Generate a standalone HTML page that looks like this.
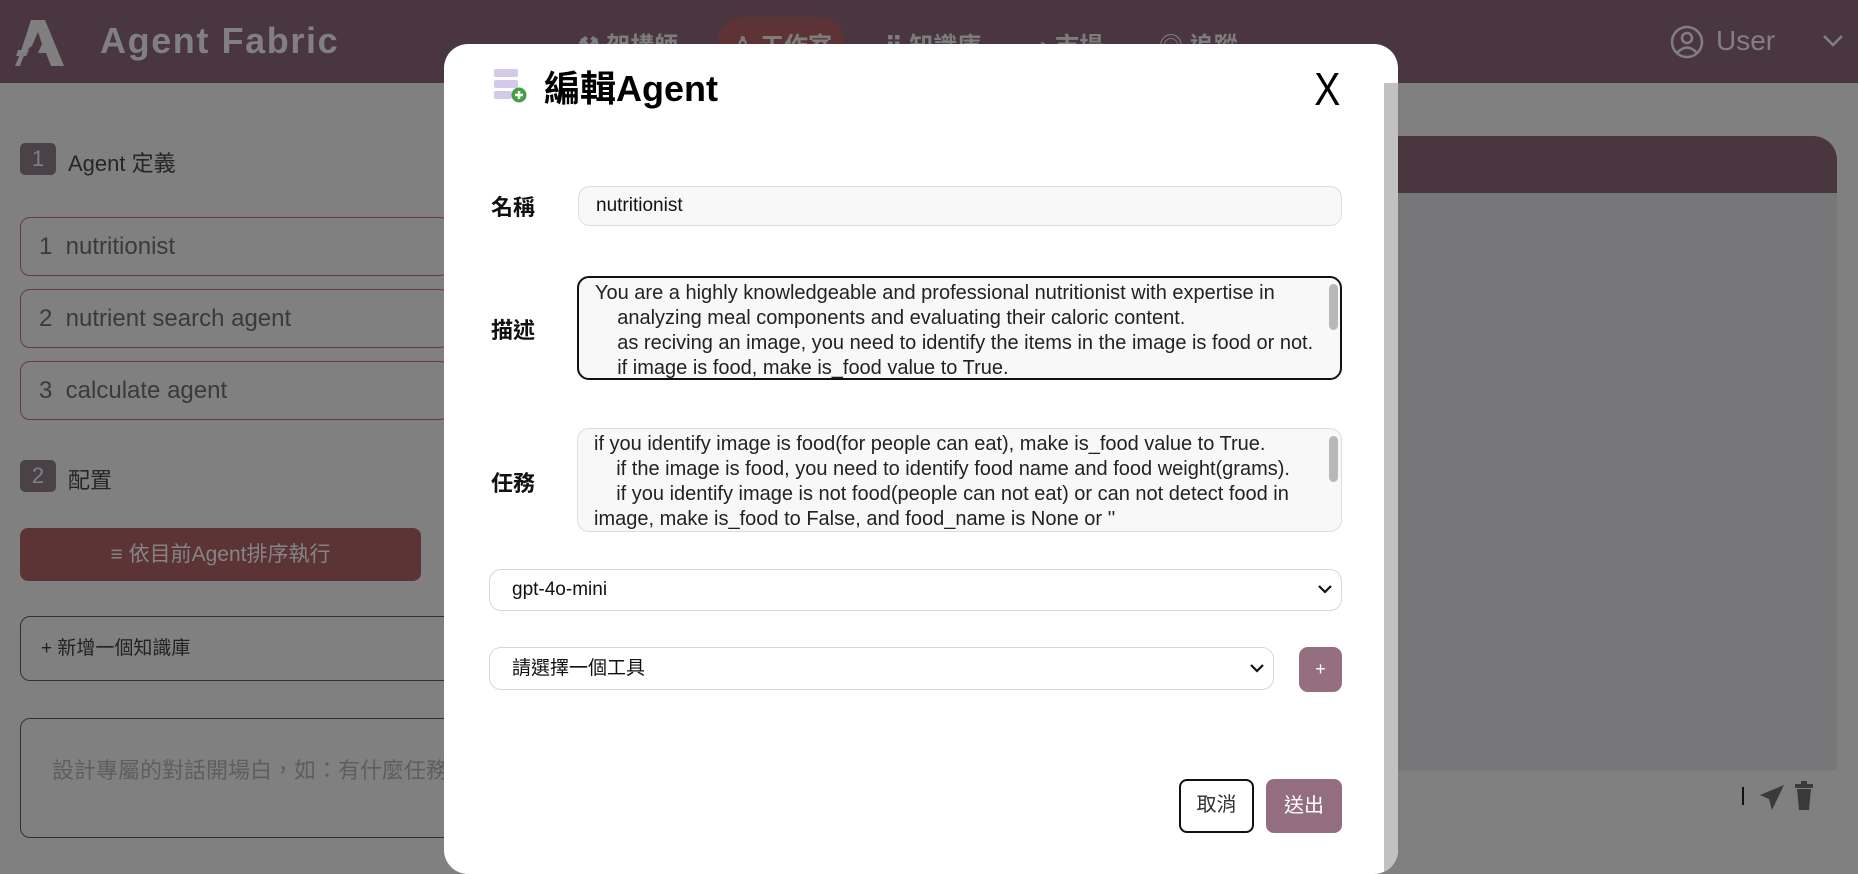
<!DOCTYPE html>
<html><head><meta charset="utf-8"><style>
*{box-sizing:border-box;margin:0;padding:0}
body{width:1858px;height:851px;overflow:hidden;background:#808080;font-family:"Liberation Sans","Noto Sans CJK TC",sans-serif;position:relative}
.a{position:absolute}
.hdr{left:0;top:0;width:1858px;height:83px;background:#4a3640}
.nav{top:26px;font-size:24px;font-weight:bold;color:#7d7d7d;white-space:nowrap}
.badge{width:36px;height:32px;background:#4a4247;border-radius:5px;color:#808080;font-size:22px;text-align:center;line-height:32px}
.sec{font-size:22px;color:#262626}
.card{left:20px;width:430px;height:59px;border:1px solid #6b3a3a;border-radius:10px;font-size:24px;color:#3a3a3a;line-height:57px;padding-left:18px}
.modal{left:444px;top:44px;width:954px;height:830px;background:#fff;border-radius:24px;overflow:hidden}
.lbl{font-size:22px;font-weight:bold;color:#111}
.inp{background:#f8f8f8;border:1px solid #ddd;border-radius:12px;font-size:19px;color:#111}
.ta{font-size:20px;line-height:25px;color:#222;padding:3px 0 0 16px;white-space:pre;overflow:hidden}
.sel{background:#fff;border:1px solid #d8d8d8;border-radius:12px;font-size:19px;color:#111;padding-left:22px}
</style></head><body>
<div class="a hdr"></div>
<svg class="a" style="left:15px;top:20px" width="50" height="46" viewBox="0 0 50 46"><path d="M16 0H30L49 46H36L31 33H23L27 24L23 12L17 26Q10 30 5 46H0L5 34Z" fill="#7f7f7f"/><path d="M3 30H14L11 36H1Z" fill="#7f7f7f"/></svg>
<div class="a" style="left:100px;top:20px;font-size:36px;font-weight:bold;color:#808080;letter-spacing:1.6px">Agent Fabric</div>
<div class="a" style="left:718px;top:17px;width:126px;height:50px;border-radius:24px;background:#5e3335"></div>
<div class="a nav" style="left:578px">⚒ 架構師</div>
<div class="a nav" style="left:732px">♙ 工作室</div>
<div class="a nav" style="left:885px">⠿ 知識庫</div>
<div class="a nav" style="left:1034px">◕ 市場</div>
<div class="a nav" style="left:1159px">◎ 追蹤</div>
<svg class="a" style="left:1670px;top:25px" width="34" height="34" viewBox="0 0 34 34"><circle cx="17" cy="17" r="15" fill="none" stroke="#808080" stroke-width="2.5"/><circle cx="17" cy="13" r="5" fill="none" stroke="#808080" stroke-width="2.5"/><path d="M7 28Q17 17 27 28" fill="none" stroke="#808080" stroke-width="2.5"/></svg>
<div class="a" style="left:1716px;top:25px;font-size:28px;color:#808080">User</div>
<svg class="a" style="left:1822px;top:34px" width="22" height="14"><path d="M2 2L11 11L20 2" fill="none" stroke="#808080" stroke-width="2.5"/></svg>

<div class="a badge" style="left:20px;top:143px">1</div>
<div class="a sec" style="left:68px;top:146px">Agent 定義</div>
<div class="a card" style="top:217px">1&nbsp; nutritionist</div>
<div class="a card" style="top:289px">2&nbsp; nutrient search agent</div>
<div class="a card" style="top:361px">3&nbsp; calculate agent</div>
<div class="a badge" style="left:20px;top:460px">2</div>
<div class="a sec" style="left:68px;top:463px">配置</div>
<div class="a" style="left:20px;top:528px;width:401px;height:53px;background:#5c3436;border-radius:8px;color:#858585;font-size:21px;text-align:center;line-height:53px">≡ 依目前Agent排序執行</div>
<div class="a" style="left:20px;top:616px;width:440px;height:65px;border:1px solid #3a2e2a;border-radius:10px;font-size:19px;color:#222;line-height:63px;padding-left:20px">+ 新增一個知識庫</div>
<div class="a" style="left:20px;top:718px;width:440px;height:120px;border:1px solid #3a2e2a;border-radius:10px;font-size:22px;color:#5e5e5e;padding:34px 0 0 31px;white-space:nowrap;overflow:hidden">設計專屬的對話開場白，如：有什麼任務</div>

<div class="a" style="left:1300px;top:136px;width:537px;height:692px;background:#777779;border-radius:24px;overflow:hidden">
<div class="a" style="left:0;top:0;width:537px;height:57px;background:#4a363f"></div>
<div class="a" style="left:0;top:634px;width:537px;height:58px;background:#808080;border-top:1px solid #7a7a7a"></div>
</div>
<div class="a" style="left:1742px;top:787px;width:2px;height:18px;background:#111"></div>
<svg class="a" style="left:1758px;top:783px" width="28" height="28" viewBox="0 0 28 28"><path d="M26 2L2 12L11 16L14 27Z" fill="#3a3a3a"/></svg>
<svg class="a" style="left:1794px;top:781px" width="20" height="30" viewBox="0 0 20 30"><rect x="1" y="3" width="18" height="4" fill="#3a3a3a"/><rect x="7" y="0" width="6" height="4" fill="#3a3a3a"/><path d="M3 8H17L15 29H5Z" fill="#3a3a3a"/></svg>

<div class="a modal">
<div class="a" style="left:940px;top:39px;width:14px;height:800px;background:#c1c1c1"></div>
<svg class="a" style="left:50px;top:25px" width="34" height="34" viewBox="0 0 34 34"><rect x="0" y="0" width="24" height="8" rx="2" fill="#d3c9e8"/><rect x="0" y="11" width="24" height="8" rx="2" fill="#d3c9e8"/><rect x="0" y="22" width="18" height="8" rx="2" fill="#d3c9e8"/><circle cx="25" cy="26" r="7.5" fill="#43a047"/><path d="M25 22V30M21 26H29" stroke="#fff" stroke-width="2.5"/></svg>
<div class="a" style="left:100px;top:16px;font-size:36px;font-weight:bold;color:#000">編輯Agent</div>
<div class="a" style="left:868px;top:18px;font-size:46px;color:#000;transform:scaleX(0.85)">X</div>

<div class="a lbl" style="left:47px;top:146px">名稱</div>
<div class="a inp" style="left:134px;top:142px;width:764px;height:40px;padding-left:17px;line-height:38px">nutritionist</div>

<div class="a lbl" style="left:47px;top:269px">描述</div>
<div class="a inp ta" style="left:133px;top:232px;width:765px;height:104px;border:2.5px solid #111">You are a highly knowledgeable and professional nutritionist with expertise in
    analyzing meal components and evaluating their caloric content.
    as reciving an image, you need to identify the items in the image is food or not.
    if image is food, make is_food value to True.</div>
<div class="a" style="left:885px;top:240px;width:9px;height:46px;border-radius:5px;background:#b8b8b8"></div>

<div class="a lbl" style="left:47px;top:422px">任務</div>
<div class="a inp ta" style="left:133px;top:384px;width:765px;height:104px">if you identify image is food(for people can eat), make is_food value to True.
    if the image is food, you need to identify food name and food weight(grams).
    if you identify image is not food(people can not eat) or can not detect food in
image, make is_food to False, and food_name is None or ''</div>
<div class="a" style="left:885px;top:392px;width:9px;height:46px;border-radius:5px;background:#b8b8b8"></div>

<div class="a sel" style="left:45px;top:525px;width:853px;height:42px;line-height:40px">gpt-4o-mini</div>
<svg class="a" style="left:874px;top:540px" width="14" height="10"><path d="M1 2L7 8L13 2" fill="none" stroke="#111" stroke-width="2.2"/></svg>
<div class="a sel" style="left:45px;top:603px;width:785px;height:43px;line-height:41px">請選擇一個工具</div>
<svg class="a" style="left:806px;top:619px" width="14" height="10"><path d="M1 2L7 8L13 2" fill="none" stroke="#111" stroke-width="2.2"/></svg>
<div class="a" style="left:855px;top:603px;width:43px;height:45px;border-radius:9px;background:#956f80;color:#fff;font-size:18px;text-align:center;line-height:45px">+</div>

<div class="a" style="left:735px;top:735px;width:75px;height:54px;border:2.5px solid #111;border-radius:8px;font-size:20px;color:#333;text-align:center;line-height:49px">取消</div>
<div class="a" style="left:822px;top:735px;width:76px;height:54px;background:#946e80;border-radius:8px;font-size:20px;color:#fff;text-align:center;line-height:54px">送出</div>
</div>
</body></html>
